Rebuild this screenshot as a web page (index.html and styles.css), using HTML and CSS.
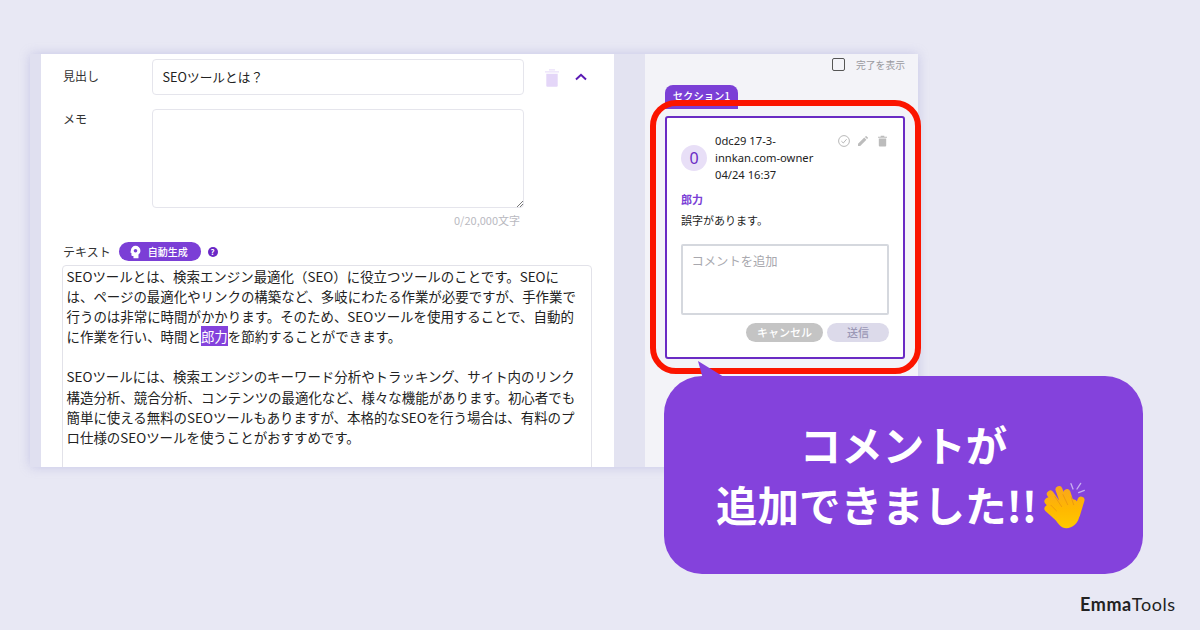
FILE: index.html
```html
<!DOCTYPE html>
<html lang="ja">
<head>
<meta charset="utf-8">
<title>EmmaTools</title>
<link rel="stylesheet" href="styles.css">
</head>
<body>
<div class="canvas">
  <div class="window">
    <div class="gutter-left"></div>
    <main class="editor">
      <div class="row row-heading">
        <label class="label">見出し</label>
        <div class="input">SEOツールとは？</div>
        <svg class="icon-del" viewBox="0 0 14 18" width="14" height="18"><path d="M0 2.2h14v1.3H0zM4 .3h6v1.2H4z" fill="#eadffa"/><path d="M1.3 4.8h11.4v12a1 1 0 0 1-1 1H2.300a1 1 0 0 1-1-1z" fill="#e4d6f8"/></svg>
        <svg class="icon-chev" viewBox="0 0 12 8" width="12" height="8"><path d="M1 6.500 6 1.800l5 4.700" fill="none" stroke="#5a19b4" stroke-width="2"/></svg>
      </div>
      <div class="row row-memo">
        <label class="label">メモ</label>
        <div class="memo-col">
          <div class="input memo">
            <svg class="grip" viewBox="0 0 6 6" width="6" height="6"><path d="M0 6 6 0M3 6l3-3" stroke="#777" stroke-width="1"/></svg>
          </div>
          <div class="count">0/20,000文字</div>
        </div>
      </div>
      <div class="text-head">
        <span class="label">テキスト</span>
        <span class="auto">
          <svg viewBox="0 0 14 14" width="13" height="14"><path d="M7 .4a5.300 5.300 0 0 1 5.300 5.300c0 1.800-.9 3.100-2.100 4.100v3.800H4.800v-2.400H3.600a1 1 0 0 1-1-1V8.200L1.500 7.600 2 5.400A5.100 5.100 0 0 1 7 .4z" fill="#fff"/><circle cx="7" cy="5.600" r="1.900" fill="#7b3fd6"/></svg>
          自動生成
        </span>
        <span class="help">?</span>
      </div>
      <div class="textbox">
        <p>SEOツールとは、検索エンジン最適化（SEO）に役立つツールのことです。SEOに<br>は、ページの最適化やリンクの構築など、多岐にわたる作業が必要ですが、手作業で<br>行うのは非常に時間がかかります。そのため、SEOツールを使用することで、自動的<br>に作業を行い、時間と<mark>郎力</mark>を節約することができます。</p>
        <p>SEOツールには、検索エンジンのキーワード分析やトラッキング、サイト内のリンク<br>構造分析、競合分析、コンテンツの最適化など、様々な機能があります。初心者でも<br>簡単に使える無料のSEOツールもありますが、本格的なSEOを行う場合は、有料のプ<br>ロ仕様のSEOツールを使うことがおすすめです。</p>
      </div>
    </main>
    <div class="gutter-mid"></div>
    <aside class="panel">
      <div class="done">
        <span class="checkbox"></span>
        <span class="done-text">完了を表示</span>
      </div>
      <div class="tag">セクション1</div>
      <div class="card">
        <div class="card-head">
          <div class="avatar">0</div>
          <div class="meta">0dc29 17-3-<br>innkan.com-owner<br>04/24 16:37</div>
          <div class="actions">
            <svg viewBox="0 0 12 12" width="12" height="12"><circle cx="6" cy="6" r="5.400" fill="none" stroke="#b8b8b8" stroke-width="1"/><path d="M3.400 6.200 5.300 8l3.300-3.800" fill="none" stroke="#b8b8b8" stroke-width="1"/></svg>
            <svg viewBox="0 0 12 12" width="10" height="12"><path d="M0 12V9.400L7.500 1.900l2.600 2.600L2.600 12zM8.300 1.100 9.200.2a.7.7 0 0 1 1 0l1.600 1.600a.7.7 0 0 1 0 1l-.9.900z" fill="#bcbcbc"/></svg>
            <svg class="act-del" viewBox="0 0 10 12" width="9" height="12"><path d="M0 1.300h10v1.100H0zM3 .2h4v1H3zM.9 3.200h8.200v7.800a1 1 0 0 1-1 1H1.900a1 1 0 0 1-1-1z" fill="#bcbcbc"/></svg>
          </div>
        </div>
        <div class="quote">郎力</div>
        <div class="comment">誤字があります。</div>
        <div class="reply">コメントを追加</div>
        <div class="buttons">
          <span class="btn cancel">キャンセル</span>
          <span class="btn send">送信</span>
        </div>
      </div>
    </aside>
  </div>
  <div class="red-frame"></div>
  <div class="callout">
    <svg class="tail" viewBox="0 0 26 18" width="26" height="18"><path d="M0 0 26 16v2H5z" fill="#8442dc"/></svg>
    <div class="callout-text">コメントが<br>追加できました!!<svg class="clap" viewBox="6 0 150 180" width="50" height="60">
      <defs><linearGradient id="g" gradientUnits="userSpaceOnUse" x1="0" y1="30" x2="0" y2="155"><stop offset="0" stop-color="#f9a51f"/><stop offset=".55" stop-color="#ffb800"/><stop offset="1" stop-color="#ffc800"/></linearGradient></defs>
      <path d="M108 23l6 16M137 22l-11 17M148 43l-17 7" stroke="#c8aef0" stroke-width="4" stroke-linecap="round" fill="none"/>
      <g fill="none" stroke="url(#g)" stroke-width="21" stroke-linecap="round">
        <path d="M72 41 95 105M96 50 112 100M46 54 85 110M39 76 80 120M39 98 80 135M138 72 125 115"/>
      </g>
      <path d="M60 100 85 60 122 72 134 85 134 118C130 142 112 157 94 157 78 156 68 142 60 128z" fill="url(#g)"/>
      <g fill="none" stroke="#ea9410" stroke-width="2.500" stroke-linecap="round">
        <path d="M60 62 80 92M84 56 98 86M108 62 116 86M48 88 64 104"/>
      </g>
    </svg></div>
  </div>
  <div class="brand"><b>Emma</b>Tools</div>
</div>
</body>
</html>
```
FILE: styles.css
```css
* { box-sizing: border-box; }
html, body { margin: 0; padding: 0; }
body {
  font-family: "Noto Sans CJK JP", "Noto Sans", sans-serif;
  color: #222;
}
.canvas {
  position: relative;
  width: 1200px;
  height: 630px;
  overflow: hidden;
  background: #e8e8f4;
  padding: 54px 0 0 30px;
}
.window {
  display: flex;
  width: 888px;
  height: 413px;
  overflow: hidden;
  box-shadow: 0 0 10px rgba(150, 150, 210, .4);
}
.gutter-left { width: 11px; background: #e0e0f0; }
.gutter-mid { width: 31px; background: #e3e3f1; }
.editor {
  width: 573px;
  background: #fff;
  padding: 5px 0 0 21px;
}
.row { display: flex; align-items: flex-start; }
.label { font-size: 12px; line-height: 18px; color: #333; padding-left: 1px; }
.row .label { width: 90px; flex: none; }
.row-heading { height: 36px; }
.row-heading .label { margin-top: 8px; }
.row-memo { margin-top: 14px; }
.row-memo .label { margin-top: 1px; }
.input {
  width: 372px;
  height: 36px;
  padding: 0 9.500px;
  border: 1.500px solid #e5e5ec;
  border-radius: 4px;
  font-size: 12.700px;
  line-height: 34px;
  color: #222;
}
.memo { height: 99px; position: relative; }
.grip { position: absolute; right: 0; bottom: 0; }
.icon-del { margin: 10px 0 0 21px; }
.icon-chev { margin: 14px 0 0 16px; }
.memo-col { width: 372px; }
.count {
  font-size: 11px;
  line-height: 14px;
  color: #b9b9bf;
  text-align: right;
  padding: 5px 4px 0 0;
}
.text-head {
  display: flex;
  align-items: center;
  height: 19px;
  margin-top: 15px;
}
.text-head .label { padding-left: 1px; }
.auto {
  display: flex;
  align-items: center;
  gap: 6px;
  width: 82px;
  height: 19px;
  margin-left: 8px;
  padding-left: 10px;
  border-radius: 10px;
  background: #7b3fd6;
  color: #fff;
  font-size: 10px;
  font-weight: 500;
}
.help {
  width: 10px;
  height: 10px;
  margin-left: 7px;
  border-radius: 50%;
  background: #6a27c6;
  color: #fff;
  font-size: 8px;
  font-weight: 700;
  line-height: 10px;
  text-align: center;
}
.textbox {
  width: 530px;
  height: 220px;
  margin-top: 4px;
  padding: 0 0 0 3.500px;
  border: 1px solid #e2e2e9;
  border-radius: 4px;
  font-size: 13.450px;
  line-height: 20.100px;
  color: #222;
  white-space: nowrap;
}
.textbox p { margin: 0 0 20.100px; }
mark { background: #8442dc; color: #fff; }
.panel {
  width: 273px;
  background: #f3f3f8;
  padding: 4px 0 0 20px;
}
.done {
  display: flex;
  align-items: center;
  justify-content: flex-end;
  height: 13px;
  margin-right: 13px;
  gap: 11px;
}
.checkbox {
  width: 13px;
  height: 13px;
  border: 1.500px solid #555;
  border-radius: 2px;
}
.done-text { font-size: 9.800px; line-height: 13px; color: #9a9aa0; margin-top: 1px; }
.tag {
  width: 73px;
  height: 24px;
  margin-top: 14px;
  border-radius: 8px 8px 0 0;
  background: #7b3fd6;
  color: #fff;
  font-size: 10.300px;
  font-weight: 500;
  line-height: 21px;
  text-align: center;
}
.card {
  width: 240px;
  height: 243px;
  margin-top: 7px;
  padding: 14px 14px 0;
  border: 2px solid #6a2bc4;
  border-radius: 3px;
  background: #fff;
  position: relative;
}
.card-head { display: flex; align-items: center; }
.avatar {
  width: 26px;
  height: 26px;
  flex: none;
  border-radius: 50%;
  background: #e8dff7;
  color: #6a2bc4;
  font-family: "Noto Sans", sans-serif;
  font-size: 16px;
  line-height: 26px;
  text-align: center;
}
.meta {
  width: 109px;
  margin-left: 8px;
  font-family: "Noto Sans", sans-serif;
  font-size: 11.200px;
  line-height: 17px;
  color: #222;
  white-space: nowrap;
}
.actions {
  display: flex;
  gap: 8px;
  align-self: flex-start;
  margin: 3px 0 0 14px;
}
.act-del { margin-left: 1.500px; }
.quote {
  margin-top: 8px;
  font-size: 11px;
  font-weight: 700;
  line-height: 16px;
  color: #7b3fd6;
}
.comment { margin-top: 5px; font-size: 11px; line-height: 16px; color: #222; }
.reply {
  width: 208px;
  height: 71px;
  margin-top: 16px;
  padding: 6px 8.500px;
  border: 2px solid #d5d8de;
  border-radius: 2px;
  font-size: 12.300px;
  line-height: 18px;
  color: #a8a8ae;
}
.buttons { display: flex; justify-content: flex-end; gap: 4px; margin-top: 8px; width: 208px; }
.btn {
  height: 19px;
  border-radius: 10px;
  font-size: 11px;
  font-weight: 500;
  line-height: 19px;
  text-align: center;
}
.cancel { width: 77px; background: #c4c4c4; color: #fff; }
.send { width: 62px; background: #dcdaea; color: #9a97b5; }
.red-frame {
  position: absolute;
  left: 650px;
  top: 100px;
  width: 271px;
  height: 274px;
  border: 6px solid #fb1500;
  border-radius: 26px;
}
.callout {
  position: absolute;
  left: 664px;
  top: 376px;
  width: 479px;
  height: 198px;
  padding-top: 38px;
  border-radius: 38px;
  background: #8442dc;
}
.tail { position: absolute; left: 34px; top: -15px; }
.callout-text {
  font-size: 41.500px;
  font-weight: 700;
  line-height: 60px;
  color: #fff;
  text-align: center;
  white-space: nowrap;
}
.clap { vertical-align: 16px; margin: -30px 4px -30px 0; }
.brand {
  position: absolute;
  left: 1080px;
  top: 593px;
  font-family: Lato, sans-serif;
  font-size: 18px;
  letter-spacing: .6px;
  line-height: 22px;
  color: #222;
}
.brand b { font-weight: 700; }
```
